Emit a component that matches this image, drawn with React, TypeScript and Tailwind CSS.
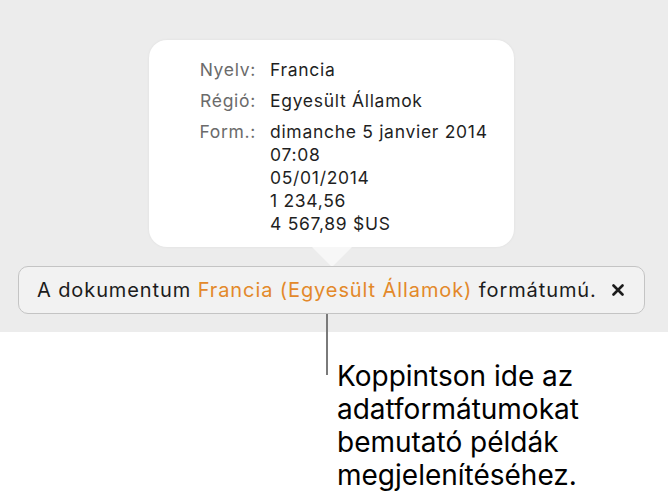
const FONT = "font-['Inter','Helvetica','Liberation_Sans',sans-serif]";

function InfoRow({ label, lines }: { label: string; lines: string[] }) {
  return (
    <>
      <div className="text-right text-[#6b6b6b]">{label}</div>
      <div className="flex flex-col text-[#1f1f1f]">
        {lines.map((l, i) => (
          <span key={i}>{l}</span>
        ))}
      </div>
    </>
  );
}

export default function App() {
  return (
    <div className={`w-[668px] h-[503px] bg-white ${FONT}`}>
      {/* gray app area */}
      <div className="h-[332px] bg-[#ececec] pt-[40px] flex flex-col items-start">
        <div className="ml-[149px] flex flex-col items-center">
          <div className="w-[365px] h-[207px] rounded-[18px] bg-white shadow-[0_0_3px_rgba(0,0,0,0.06)] pt-[18px]">
            <div className="grid grid-cols-[107px_1fr] gap-x-[14px] gap-y-[8px] text-[17.5px] tracking-[0.04em] leading-[23px]">
              <InfoRow label="Nyelv:" lines={["Francia"]} />
              <InfoRow label="Régió:" lines={["Egyesült Államok"]} />
              <InfoRow
                label="Form.:"
                lines={["dimanche 5 janvier 2014", "07:08", "05/01/2014", "1 234,56", "4 567,89 $US"]}
              />
            </div>
          </div>
          <svg width="40" height="20" viewBox="0 0 40 20" className="-mb-[1px]">
            <path d="M0 0 L20 20 L40 0 Z" fill="#f7f7f7" />
          </svg>
        </div>
        <div className="ml-[18px] w-[627px] h-[48px] rounded-[10px] border border-[#c4c4c4] bg-[#f2f2f2] flex items-center pl-[18px] pr-[20px] text-[20px] tracking-[0.045em] text-[#1c1c1c]">
          <span>
            A dokumentum <span className="text-[#e3892a]">Francia (Egyesült Államok)</span> formátumú.
          </span>
          <span className="ml-auto">
            <svg width="12" height="12" viewBox="0 0 12 12">
              <path d="M1.5 1.5 L10.5 10.5 M10.5 1.5 L1.5 10.5" stroke="#1c1c1c" strokeWidth="2.6" strokeLinecap="round" />
            </svg>
          </span>
        </div>
      </div>
      {/* callout */}
      <div className="flex">
        <div className="ml-[326px] -mt-[18px] w-[2px] h-[61px] bg-[#7a7a7a]" />
        <div className="ml-[9px] mt-[28px] text-[28px] leading-[33px] text-black">
          Koppintson ide az
          <br />
          adatformátumokat
          <br />
          bemutató példák
          <br />
          megjelenítéséhez.
        </div>
      </div>
    </div>
  );
}
